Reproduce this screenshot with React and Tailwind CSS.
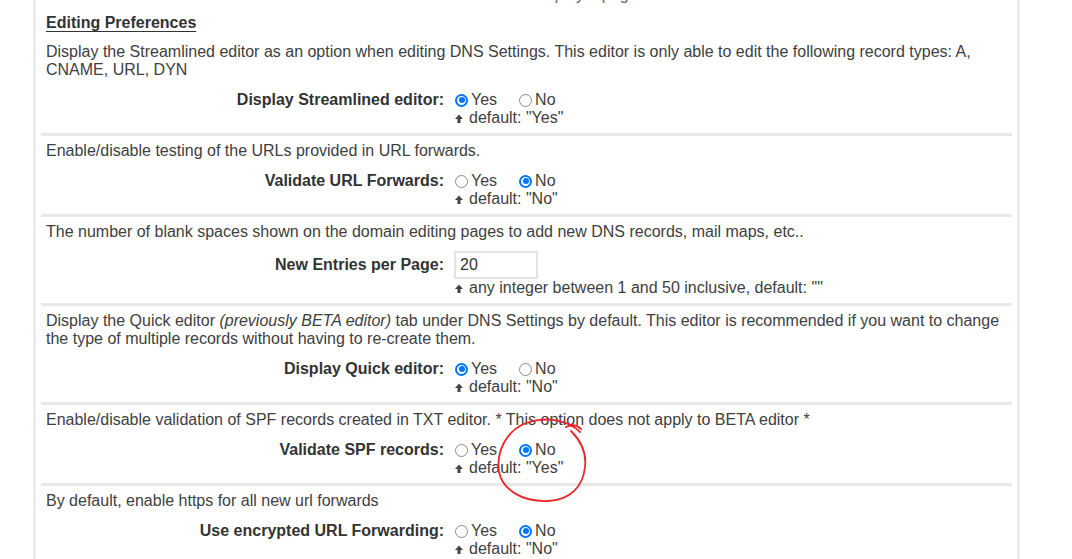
import React from 'react';

function Radio({ checked }) {
  return checked ? (
    <span className="ml-[1px] mr-[3px] flex h-[13px] w-[13px] items-center justify-center rounded-full border-2 border-[#0075ff] bg-white">
      <span className="h-[6px] w-[6px] rounded-full bg-[#0075ff]"></span>
    </span>
  ) : (
    <span className="ml-[1px] mr-[3px] h-[13px] w-[13px] rounded-full border border-[#8a8a8a] bg-white"></span>
  );
}

function DefaultLine({ text }) {
  return (
    <div className="flex h-[18px] items-center whitespace-nowrap">
      <svg width="8" height="9" viewBox="0 0 8 9" className="ml-[1px] mr-[6px]">
        <polygon points="0,5 4,0.5 8,5" fill="#444" />
        <rect x="2.5" y="5" width="3" height="4" fill="#444" />
      </svg>
      <span>{text}</span>
    </div>
  );
}

function YesNo({ value }) {
  return (
    <div className="flex h-[18px] items-center">
      <div className="mr-[21px] flex items-center">
        <Radio checked={value === 'yes'} />
        <span>Yes</span>
      </div>
      <div className="flex items-center">
        <Radio checked={value === 'no'} />
        <span>No</span>
      </div>
    </div>
  );
}

function Setting({ label, children, def, tall }) {
  return (
    <div className="grid grid-cols-[398px_1fr]">
      <div className={`flex items-center justify-end font-bold text-[#333] ${tall ? 'h-[28px]' : 'h-[18px]'}`}>
        {label}
      </div>
      <div className="pl-[10px]">
        {children}
        <DefaultLine text={def} />
      </div>
    </div>
  );
}

function Row({ children, last }) {
  return (
    <div className={`px-[5px] pt-[6px] pb-[6px] ${last ? '' : 'border-b-[3px] border-[#e8e8e8]'}`}>
      {children}
    </div>
  );
}

export default function App() {
  return (
    <div className="relative h-[559px] overflow-hidden bg-white font-['Liberation_Sans',Arial,sans-serif] text-base leading-[18px] text-[#404040]">
      <div className="ml-[33px] flow-root h-[559px] w-[987px] border-x-[3px] border-[#ececec] px-[5px]">
        <div className="-mt-[14px] px-[5px]">
          <div className="grid grid-cols-[398px_1fr]">
            <div></div>
            <div className="pl-[10px] text-[#666]">
              <DefaultLine text={'default: "Display 1 page list of domains"'} />
            </div>
          </div>
        </div>

        <Row>
          <div className="mt-[4px] font-bold text-[#333] underline underline-offset-[3px]">Editing Preferences</div>
          <div className="mt-[11px] whitespace-nowrap">
            Display the Streamlined editor as an option when editing DNS Settings. This editor is only able to edit the following record types: A,
            <br />
            CNAME, URL, DYN
          </div>
          <div className="mt-[12px]">
            <Setting label="Display Streamlined editor:" def={'default: "Yes"'}>
              <YesNo value="yes" />
            </Setting>
          </div>
        </Row>

        <Row>
          <div>Enable/disable testing of the URLs provided in URL forwards.</div>
          <div className="mt-[12px]">
            <Setting label="Validate URL Forwards:" def={'default: "No"'}>
              <YesNo value="no" />
            </Setting>
          </div>
        </Row>

        <Row>
          <div>The number of blank spaces shown on the domain editing pages to add new DNS records, mail maps, etc..</div>
          <div className="mt-[10px]">
            <Setting label="New Entries per Page:" def={'any integer between 1 and 50 inclusive, default: ""'} tall>
              <div className="flex h-[28px] w-[84px] items-center border-2 border-[#e3e3e3] px-[4px] text-[#333]">20</div>
            </Setting>
          </div>
        </Row>

        <Row>
          <div className="whitespace-nowrap">
            Display the Quick editor <i>(previously BETA editor)</i> tab under DNS Settings by default. This editor is recommended if you want to change
            <br />
            the type of multiple records without having to re-create them.
          </div>
          <div className="mt-[12px]">
            <Setting label="Display Quick editor:" def={'default: "No"'}>
              <YesNo value="yes" />
            </Setting>
          </div>
        </Row>

        <Row>
          <div>Enable/disable validation of SPF records created in TXT editor. * This option does not apply to BETA editor *</div>
          <div className="mt-[12px]">
            <Setting label="Validate SPF records:" def={'default: "Yes"'}>
              <YesNo value="no" />
            </Setting>
          </div>
        </Row>

        <Row last>
          <div>By default, enable https for all new url forwards</div>
          <div className="mt-[12px]">
            <Setting label="Use encrypted URL Forwarding:" def={'default: "No"'}>
              <YesNo value="no" />
            </Setting>
          </div>
        </Row>
      </div>

      <svg className="pointer-events-none absolute left-0 top-0" width="1072" height="559" viewBox="0 0 1072 559">
        <path
          d="M 580 432 C 568 420, 546 416, 526 423 C 506 431, 496 452, 499 472 C 503 490, 522 502, 548 501 C 570 500, 583 487, 585 467 C 587 451, 580 440, 571 431 M 566 427 C 572 424, 577 425, 581 429"
          fill="none"
          stroke="#e8262a"
          strokeWidth="1.8"
          strokeLinecap="round"
        />
      </svg>
    </div>
  );
}
